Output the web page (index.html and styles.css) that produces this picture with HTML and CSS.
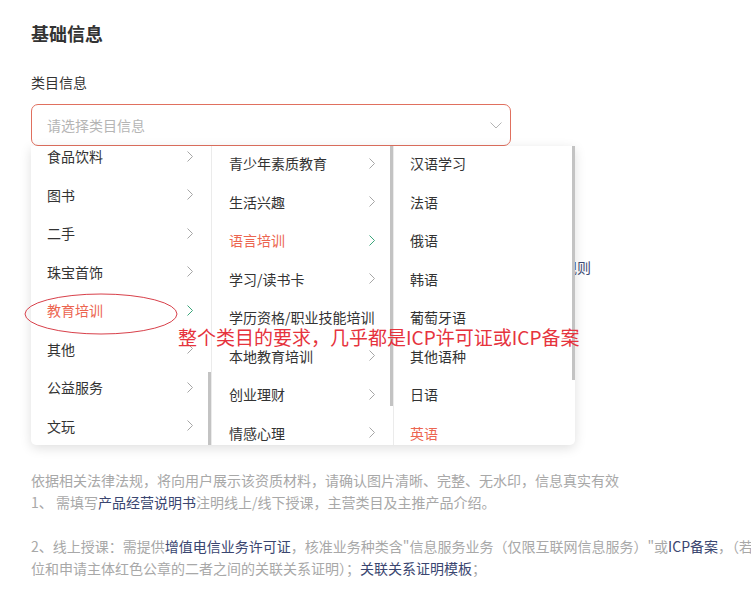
FILE: index.html
```html
<!DOCTYPE html>
<html lang="zh-CN">
<head>
<meta charset="utf-8">
<link rel="stylesheet" href="styles.css">
</head>
<body>
<div class="page">
  <h2 class="title">基础信息</h2>
  <div class="label">类目信息</div>
  <div class="field">
    <div class="select">
      <span class="placeholder">请选择类目信息</span>
      <svg class="arrow-down" width="12" height="7" viewBox="0 0 12 7"><polyline points="0.5,0.5 6,6 11.5,0.5" fill="none" stroke="#b4b4b4" stroke-width="1"/></svg>
    </div>

    <div class="hidden-row"><span class="link">查看类目资质规则</span></div>

    <div class="dropdown">
      <div class="col col1">
        <ul class="list list-scrolled">
          <li class="item"><span class="txt">食品饮料</span><svg class="chev" width="6" height="11" viewBox="0 0 6 11"><polyline points="0.5,0.5 5.5,5.5 0.5,10.5" fill="none" stroke="#a6a6a6" stroke-width="1"/></svg></li>
          <li class="item"><span class="txt">图书</span><svg class="chev" width="6" height="11" viewBox="0 0 6 11"><polyline points="0.5,0.5 5.5,5.5 0.5,10.5" fill="none" stroke="#a6a6a6" stroke-width="1"/></svg></li>
          <li class="item"><span class="txt">二手</span><svg class="chev" width="6" height="11" viewBox="0 0 6 11"><polyline points="0.5,0.5 5.5,5.5 0.5,10.5" fill="none" stroke="#a6a6a6" stroke-width="1"/></svg></li>
          <li class="item"><span class="txt">珠宝首饰</span><svg class="chev" width="6" height="11" viewBox="0 0 6 11"><polyline points="0.5,0.5 5.5,5.5 0.5,10.5" fill="none" stroke="#a6a6a6" stroke-width="1"/></svg></li>
          <li class="item active"><span class="txt">教育培训</span><svg class="chev" width="6" height="11" viewBox="0 0 6 11"><polyline points="0.5,0.5 5.5,5.5 0.5,10.5" fill="none" stroke="#3aa57a" stroke-width="1"/></svg></li>
          <li class="item"><span class="txt">其他</span><svg class="chev" width="6" height="11" viewBox="0 0 6 11"><polyline points="0.5,0.5 5.5,5.5 0.5,10.5" fill="none" stroke="#a6a6a6" stroke-width="1"/></svg></li>
          <li class="item"><span class="txt">公益服务</span><svg class="chev" width="6" height="11" viewBox="0 0 6 11"><polyline points="0.5,0.5 5.5,5.5 0.5,10.5" fill="none" stroke="#a6a6a6" stroke-width="1"/></svg></li>
          <li class="item"><span class="txt">文玩</span><svg class="chev" width="6" height="11" viewBox="0 0 6 11"><polyline points="0.5,0.5 5.5,5.5 0.5,10.5" fill="none" stroke="#a6a6a6" stroke-width="1"/></svg></li>
        </ul>
        <div class="thumb thumb1"></div>
      </div>
      <div class="col col2">
        <ul class="list list-top">
          <li class="item"><span class="txt">青少年素质教育</span><svg class="chev" width="6" height="11" viewBox="0 0 6 11"><polyline points="0.5,0.5 5.5,5.5 0.5,10.5" fill="none" stroke="#a6a6a6" stroke-width="1"/></svg></li>
          <li class="item"><span class="txt">生活兴趣</span><svg class="chev" width="6" height="11" viewBox="0 0 6 11"><polyline points="0.5,0.5 5.5,5.5 0.5,10.5" fill="none" stroke="#a6a6a6" stroke-width="1"/></svg></li>
          <li class="item active"><span class="txt">语言培训</span><svg class="chev" width="6" height="11" viewBox="0 0 6 11"><polyline points="0.5,0.5 5.5,5.5 0.5,10.5" fill="none" stroke="#3aa57a" stroke-width="1"/></svg></li>
          <li class="item"><span class="txt">学习/读书卡</span><svg class="chev" width="6" height="11" viewBox="0 0 6 11"><polyline points="0.5,0.5 5.5,5.5 0.5,10.5" fill="none" stroke="#a6a6a6" stroke-width="1"/></svg></li>
          <li class="item"><span class="txt txt-clip">学历资格/职业技能培训</span></li>
          <li class="item"><span class="txt">本地教育培训</span><svg class="chev" width="6" height="11" viewBox="0 0 6 11"><polyline points="0.5,0.5 5.5,5.5 0.5,10.5" fill="none" stroke="#a6a6a6" stroke-width="1"/></svg></li>
          <li class="item"><span class="txt">创业理财</span><svg class="chev" width="6" height="11" viewBox="0 0 6 11"><polyline points="0.5,0.5 5.5,5.5 0.5,10.5" fill="none" stroke="#a6a6a6" stroke-width="1"/></svg></li>
          <li class="item"><span class="txt">情感心理</span><svg class="chev" width="6" height="11" viewBox="0 0 6 11"><polyline points="0.5,0.5 5.5,5.5 0.5,10.5" fill="none" stroke="#a6a6a6" stroke-width="1"/></svg></li>
        </ul>
        <div class="thumb thumb2"></div>
      </div>
      <div class="col col3">
        <ul class="list list-top">
          <li class="item"><span class="txt">汉语学习</span></li>
          <li class="item"><span class="txt">法语</span></li>
          <li class="item"><span class="txt">俄语</span></li>
          <li class="item"><span class="txt">韩语</span></li>
          <li class="item"><span class="txt">葡萄牙语</span></li>
          <li class="item"><span class="txt">其他语种</span></li>
          <li class="item"><span class="txt">日语</span></li>
          <li class="item active"><span class="txt">英语</span></li>
          <li class="item"><span class="txt">德语</span></li>
        </ul>
        <div class="thumb thumb3"></div>
      </div>
    </div>

    <svg class="ellipse" width="154" height="42" viewBox="0 0 154 42"><ellipse cx="77" cy="21" rx="76" ry="20" fill="none" stroke="#d8404a" stroke-width="1"/></svg>
    <div class="note">整个类目的要求，几乎都是ICP许可证或ICP备案</div>
  </div>

  <div class="desc">
    <p class="line">依据相关法律法规，将向用户展示该资质材料，请确认图片清晰、完整、无水印，信息真实有效</p>
    <p class="line">1、 需填写<span class="lk">产品经营说明书</span>注明线上/线下授课，主营类目及主推产品介绍。</p>
    <p class="line">&nbsp;</p>
    <p class="line">2、线上授课：需提供<span class="lk">增值电信业务许可证</span>，核准业务种类含"信息服务业务（仅限互联网信息服务）"或<span class="lk">ICP备案</span>，（若ICP备案主体与申请主体不一致，需提供备案单</p>
    <p class="line">位和申请主体红色公章的二者之间的关联关系证明）；<span class="lk">关联关系证明模板</span>；</p>
  </div>
</div>
</body>
</html>
```

FILE: styles.css
```css
* { box-sizing: border-box; }
html, body {
  margin: 0;
  padding: 0;
  background: #ffffff;
  overflow: hidden;
}
body {
  font-family: "Microsoft YaHei", "Noto Sans CJK SC", "Noto Sans", sans-serif;
  color: #333333;
  width: 751px;
  height: 599px;
}
.page {
  padding: 22px 0 0 31px;
}
.title {
  margin: 0;
  font-size: 18px;
  line-height: 22px;
  font-weight: 700;
  color: #333333;
}
.label {
  margin-top: 28px;
  font-size: 14px;
  line-height: 20px;
  color: #333333;
}
.field {
  position: relative;
  margin-top: 12px;
  width: 720px;
}
.select {
  width: 480px;
  height: 42px;
  border: 1px solid #e0705f;
  border-radius: 7px;
  display: flex;
  align-items: center;
  justify-content: space-between;
  padding: 0 8px 0 15px;
  background: #fff;
}
.placeholder {
  font-size: 14px;
  color: #b5b5b5;
  line-height: 20px;
}
.arrow-down { display: block; margin-top: 1px; }

.hidden-row {
  margin-top: 110px;
  width: 560px;
  text-align: right;
  font-size: 14px;
  line-height: 22px;
}
.link { color: #3e4b74; }

.dropdown {
  position: absolute;
  top: 42px;
  left: 0;
  width: 544px;
  height: 299px;
  background: #ffffff;
  border-radius: 0 0 5px 5px;
  box-shadow: 0 3px 12px rgba(0, 0, 0, 0.13);
  display: flex;
  overflow: hidden;
  z-index: 2;
}
.col {
  position: relative;
  height: 100%;
  overflow: hidden;
}
.col1 { width: 180px; }
.col2 { width: 182px; border-left: 1px solid #ebebeb; }
.col3 { width: 182px; border-left: 1px solid #ebebeb; }
.list {
  list-style: none;
  margin: 0;
  padding: 0;
}
.list-scrolled { margin-top: -9px; }
.list-top { margin-top: -2px; }
.item {
  height: 38.5px;
  display: flex;
  align-items: center;
  justify-content: space-between;
  font-size: 14px;
  color: #333333;
  white-space: nowrap;
}
.col1 .item { padding: 0 18px 0 16px; }
.col2 .item { padding: 0 18px 0 17px; }
.col3 .item { padding: 0 18px 0 16px; }
.txt { line-height: 20px; }
.txt-clip {
  display: block;
  width: 145px;
  overflow: hidden;
}
.item.active .txt { color: #ec6550; }
.chev { display: block; flex-shrink: 0; }

.thumb {
  position: absolute;
  right: 0;
  width: 3px;
  background: #c3c3c3;
}
.thumb1 { top: 226px; height: 73px; }
.thumb2 { top: 0; height: 260px; }
.thumb3 { top: 0; height: 234px; }

.ellipse {
  position: absolute;
  left: -7px;
  top: 189px;
  z-index: 3;
}
.note {
  position: absolute;
  left: 147px;
  top: 221px;
  font-size: 19px;
  line-height: 24px;
  color: #e6333d;
  white-space: nowrap;
  z-index: 3;
}

.desc {
  margin-top: 191px;
}
.line {
  margin: 0;
  font-size: 14px;
  line-height: 22px;
  color: #a8a8a8;
  white-space: nowrap;
}
.lk { color: #3a4670; }
```
